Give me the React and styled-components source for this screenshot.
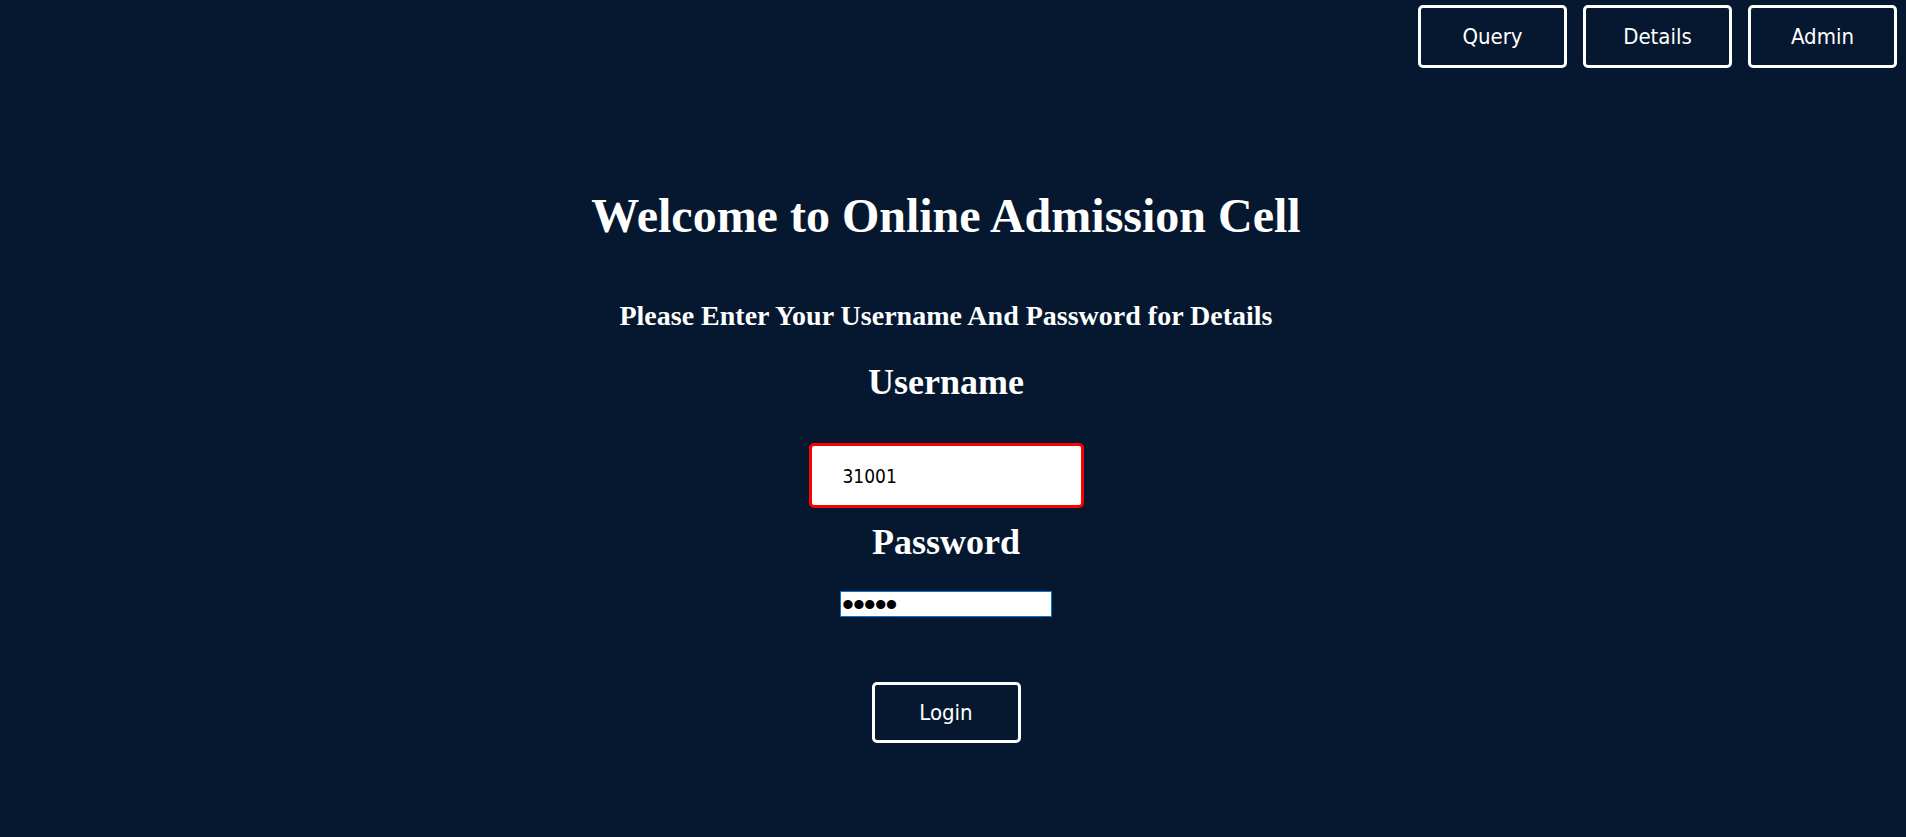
import React from 'react';
import styled, { createGlobalStyle } from 'styled-components';

const GlobalStyle = createGlobalStyle`
  html, body {
    margin: 0;
    padding: 0;
    background-color: #05182f;
  }
`;

const Page = styled.div`
  min-height: 837px;
  background-color: #05182f;
  color: #ffffff;
`;

const Nav = styled.nav`
  display: flex;
  justify-content: flex-end;
  gap: 16px;
  padding: 5px 9px 0 0;
`;

const Button = styled.button`
  box-sizing: border-box;
  width: 149px;
  height: ${(p) => (p.$tall ? 63 : 61)}px;
  background: transparent;
  border: 3px solid #ffffff;
  border-radius: 5px;
  color: #ffffff;
  font-family: 'DejaVu Sans Condensed', 'DejaVu Sans', sans-serif;
  font-size: 22px;
  cursor: pointer;
`;

const Main = styled.main`
  display: flex;
  flex-direction: column;
  align-items: center;
  padding-right: 14px;
  font-family: 'Liberation Serif', 'Times New Roman', serif;
  font-weight: bold;
`;

const Title = styled.h1`
  margin: 124px 0 0;
  font-size: 48px;
  line-height: 48px;
`;

const Subtitle = styled.h3`
  margin: 62px 0 0;
  font-size: 28px;
  line-height: 28px;
`;

const Label = styled.h2`
  margin: ${(p) => p.$gap}px 0 0;
  font-size: 36px;
  line-height: 36px;
`;

const UserInput = styled.input`
  box-sizing: border-box;
  margin-top: 43px;
  width: 275px;
  height: 65px;
  padding: 0 0 0 31px;
  border: 3px solid #ff0000;
  border-radius: 5px;
  background: #ffffff;
  color: #000000;
  font-family: 'DejaVu Sans Condensed', 'DejaVu Sans', sans-serif;
  font-size: 19px;
  outline: none;
`;

const PassInput = styled.input`
  box-sizing: border-box;
  margin-top: 31px;
  width: 212px;
  height: 26px;
  padding: 0 0 0 1px;
  border: 1px solid #0078d7;
  background: #ffffff;
  color: #000000;
  font-family: 'Liberation Sans', Arial, sans-serif;
  font-size: 34px;
  letter-spacing: -1px;
  outline: none;
`;

const LoginButton = styled(Button)`
  margin-top: 65px;
`;

const App = () => {
  return (
    <Page>
      <GlobalStyle />
      <Nav>
        <Button $tall>Query</Button>
        <Button $tall>Details</Button>
        <Button $tall>Admin</Button>
      </Nav>
      <Main>
        <Title>Welcome to Online Admission Cell</Title>
        <Subtitle>Please Enter Your Username And Password for Details</Subtitle>
        <Label $gap={34}>Username</Label>
        <UserInput type="text" defaultValue="31001" />
        <Label $gap={16}>Password</Label>
        <PassInput type="password" defaultValue="12345" />
        <LoginButton>Login</LoginButton>
      </Main>
    </Page>
  );
};

export default App;
